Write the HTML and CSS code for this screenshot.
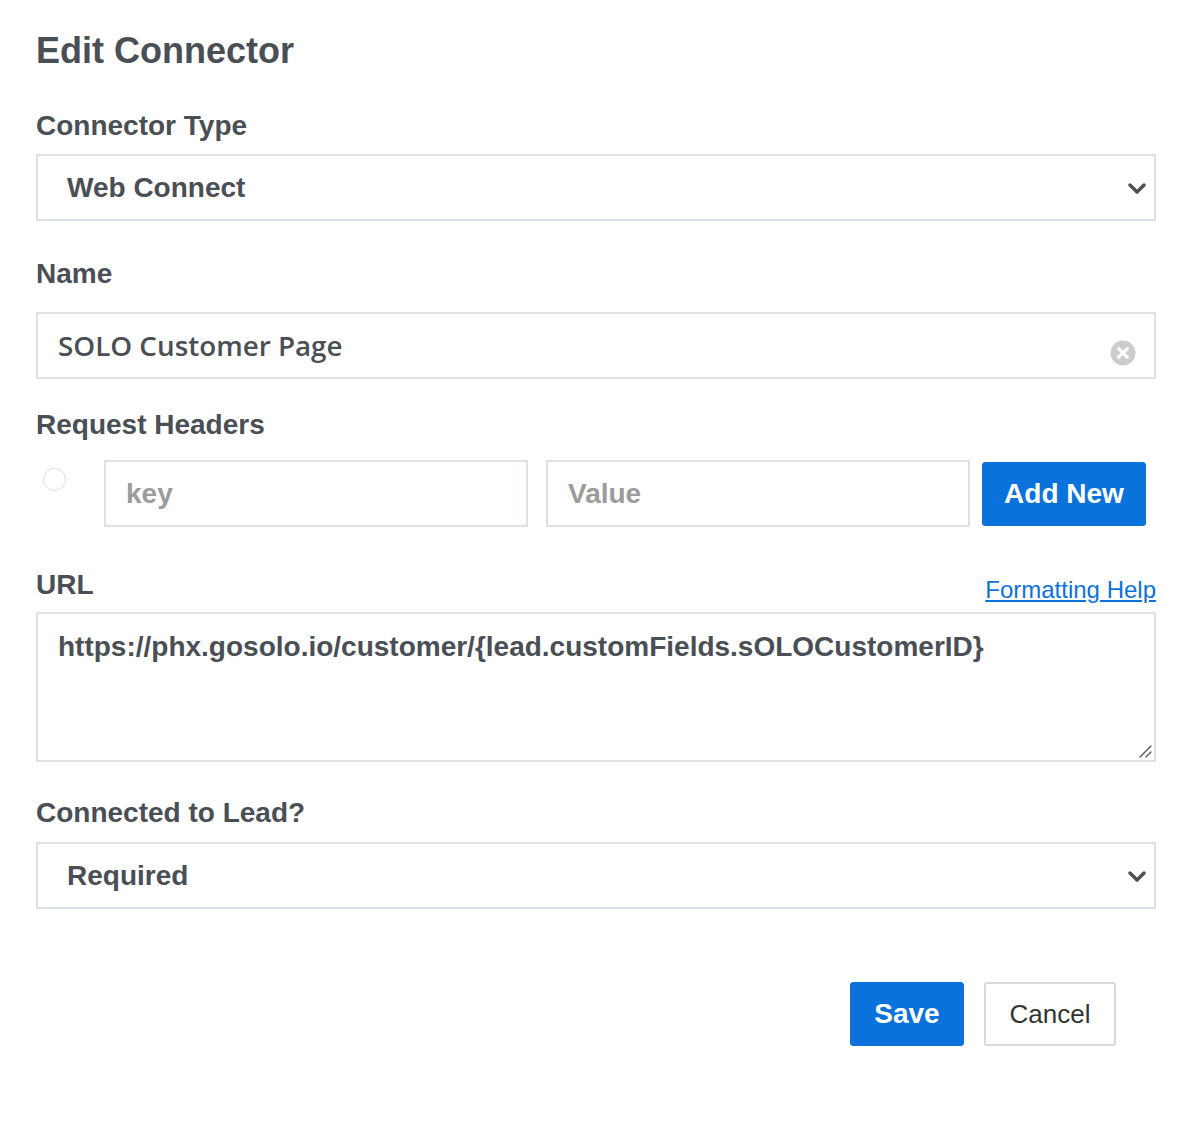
FILE: index.html
```html
<!DOCTYPE html>
<html>
<head>
<meta charset="utf-8">
<link rel="stylesheet" href="styles.css">
</head>
<body>
<div class="form">
  <h1 class="title">Edit Connector</h1>

  <div class="label label-type">Connector Type</div>
  <div class="select select-type">
    <span class="select-text">Web Connect</span>
    <svg class="chevron" width="18" height="12" viewBox="0 0 18 12"><path d="M2 2 L9 9 L16 2" fill="none" stroke="#4a4f55" stroke-width="3.4" stroke-linecap="round" stroke-linejoin="round"/></svg>
  </div>

  <div class="label label-name">Name</div>
  <div class="input input-name">
    <span class="name-text">SOLO Customer Page</span>
    <svg class="clear" width="26" height="26" viewBox="0 0 26 26"><circle cx="13" cy="13" r="12.5" fill="#cccccc"/><path d="M8.6 8.6 L17.4 17.4 M17.4 8.6 L8.6 17.4" stroke="#ffffff" stroke-width="3.2" stroke-linecap="round"/></svg>
  </div>

  <div class="label label-headers">Request Headers</div>
  <div class="headers-row">
    <span class="radio"></span>
    <div class="input input-small"><span class="placeholder">key</span></div>
    <div class="input input-small"><span class="placeholder">Value</span></div>
    <button class="btn btn-primary btn-add">Add New</button>
  </div>

  <div class="url-head">
    <div class="label label-url">URL</div>
    <a class="help-link" href="#">Formatting Help</a>
  </div>
  <div class="textarea">
    <span class="url-text">https://phx.gosolo.io/customer/{lead.customFields.sOLOCustomerID}</span>
    <svg class="resize" width="16" height="16" viewBox="0 0 16 16"><path d="M14 3 L3 14 M14 9 L9 14" stroke="#555" stroke-width="1.4" stroke-linecap="round"/></svg>
  </div>

  <div class="label label-lead">Connected to Lead?</div>
  <div class="select select-lead">
    <span class="select-text">Required</span>
    <svg class="chevron" width="18" height="12" viewBox="0 0 18 12"><path d="M2 2 L9 9 L16 2" fill="none" stroke="#4a4f55" stroke-width="3.4" stroke-linecap="round" stroke-linejoin="round"/></svg>
  </div>

  <div class="actions">
    <button class="btn btn-primary btn-save">Save</button>
    <button class="btn btn-cancel">Cancel</button>
  </div>
</div>
</body>
</html>
```

FILE: styles.css
```css
html, body {
  margin: 0;
  padding: 0;
  background: #ffffff;
}

body {
  font-family: "Liberation Sans", Arial, sans-serif;
  color: #4a4f55;
}

.form {
  width: 1120px;
  padding: 31px 0 60px 36px;
}

.title {
  margin: 0;
  font-size: 36px;
  line-height: 40px;
  font-weight: 700;
}

.label {
  font-size: 28px;
  line-height: 28px;
  font-weight: 700;
}

.label-type { margin-top: 41px; }
.label-name { margin-top: 39px; }
.label-headers { margin-top: 32px; }
.label-lead { margin-top: 37px; }

.select,
.input,
.textarea {
  box-sizing: border-box;
  border: 2px solid #dde1e4;
  background: #fff;
  position: relative;
}

.select {
  height: 67px;
  display: flex;
  align-items: center;
  padding-left: 29px;
  padding-right: 8px;
}

.select-type { margin-top: 14px; }
.select-lead { margin-top: 15px; }

.select-text {
  flex: 1;
  font-size: 28px;
  font-weight: 700;
}

.chevron {
  display: block;
  margin-top: 2px;
}

.input {
  height: 67px;
  display: flex;
  align-items: center;
}

.input-name {
  margin-top: 24px;
  padding-left: 20px;
  padding-right: 18px;
}

.name-text {
  flex: 1;
  font-family: "Open Sans", "Noto Sans", sans-serif;
  font-weight: 600;
  font-size: 27.8px;
  color: #4a4f55;
  margin-top: -2px;
}

.clear {
  display: block;
  margin-top: 14px;
}

.headers-row {
  margin-top: 21px;
  display: flex;
  align-items: flex-start;
  height: 67px;
}

.radio {
  box-sizing: border-box;
  width: 23px;
  height: 23px;
  border: 1.5px solid #dcdcdc;
  border-radius: 50%;
  margin-left: 7px;
  margin-top: 8px;
  flex: none;
}

.input-small {
  width: 424px;
  margin-left: 38px;
  padding-left: 20px;
}

.input-small + .input-small {
  margin-left: 18px;
}

.placeholder {
  font-size: 28px;
  font-weight: 700;
  color: #9b9b9b;
}

.btn {
  box-sizing: border-box;
  font-family: "Liberation Sans", Arial, sans-serif;
  border-radius: 3px;
  cursor: pointer;
  padding: 0;
}

.btn-primary {
  background: #0b72db;
  border: 1px solid #0b72db;
  color: #ffffff;
  font-weight: 700;
  font-size: 28px;
}

.btn-add {
  margin-left: 12px;
  margin-top: 2px;
  width: 164px;
  height: 64px;
}

.url-head {
  margin-top: 44px;
  height: 28px;
  display: flex;
  justify-content: space-between;
  align-items: flex-start;
}

.help-link {
  font-size: 24px;
  line-height: 28px;
  color: #0b72db;
  text-decoration: underline;
  margin-top: 5px;
}

.textarea {
  margin-top: 13px;
  height: 150px;
  padding: 17px 20px;
}

.url-text {
  font-size: 28px;
  font-weight: 700;
  line-height: 32px;
}

.resize {
  position: absolute;
  right: 1px;
  bottom: 1px;
}

.actions {
  margin-top: 73px;
  display: flex;
  justify-content: flex-end;
  padding-right: 40px;
}

.btn-save {
  width: 114px;
  height: 64px;
}

.btn-cancel {
  margin-left: 20px;
  width: 132px;
  height: 64px;
  background: #fff;
  border: 2px solid #d9d9d9;
  color: #333;
  font-size: 26px;
  font-weight: 400;
}
```
